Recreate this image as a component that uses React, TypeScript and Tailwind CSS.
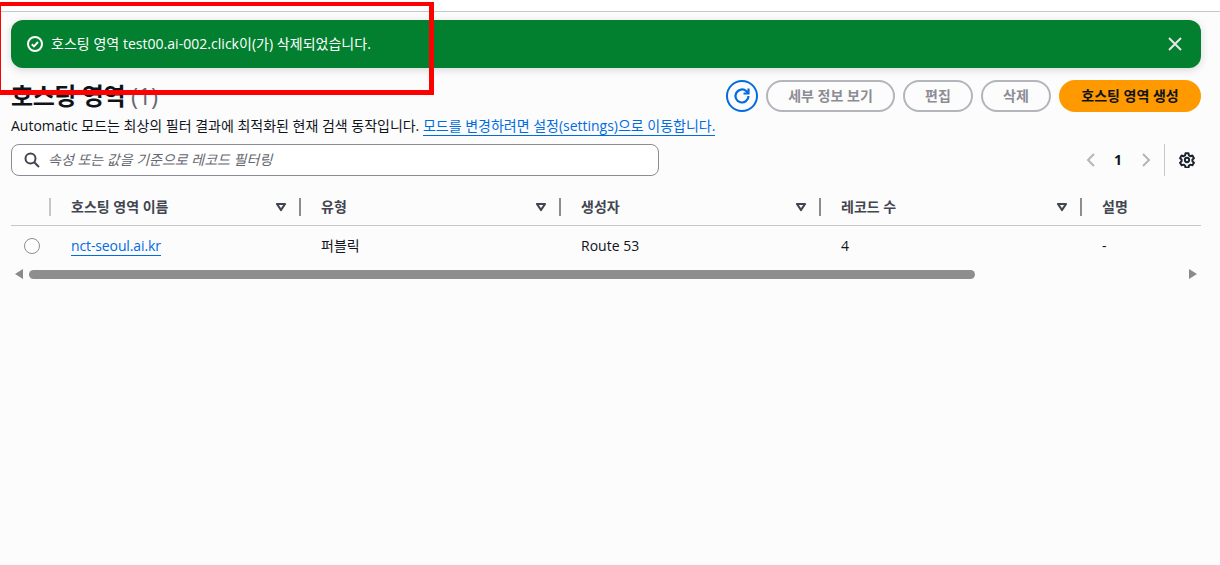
const FONT = "font-['Open_Sans','Noto_Sans_CJK_KR',sans-serif]";

const columns = [
  { label: "호스팅 영역 이름", width: "w-[250px]", divider: "bg-[#c6c6cd]", caret: true },
  { label: "유형", width: "w-[260px]", divider: "bg-[#8c8c94]", caret: true },
  { label: "생성자", width: "w-[260px]", divider: "bg-[#8c8c94]", caret: true },
  { label: "레코드 수", width: "w-[261px]", divider: "bg-[#8c8c94]", caret: true },
  { label: "설명", width: "w-[100px]", divider: "bg-[#8c8c94]", caret: false },
];

const Caret = () => (
  <svg width="12" height="10" viewBox="0 0 12 10" className="shrink-0">
    <path d="M2 2h8L6 8z" fill="none" stroke="#424650" strokeWidth="2.200" strokeLinejoin="round" />
  </svg>
);

const PillButton = ({ label, width }: { label: string; width: string }) => (
  <div className={`flex h-8 items-center justify-center rounded-full border-2 border-[#b4b4bb] text-sm font-bold text-[#8c8c94] ${width}`}>
    {label}
  </div>
);

export default function App() {
  return (
    <div className={`relative h-[565px] w-[1220px] overflow-hidden bg-[#fcfcfd] ${FONT}`}>
      <div className="h-[12px] border-b border-[#c6c6cd] bg-white" />

      <div className="mx-[11px] mt-2 flex h-12 w-[1190px] items-center justify-between rounded-xl bg-[#037f30] pl-4 pr-[18px] text-white shadow-[0_2px_8px_rgba(0,7,22,0.15)]">
        <div className="flex items-center gap-2 text-sm tracking-[0.03px]">
          <svg width="16" height="16" viewBox="0 0 16 16" fill="none" stroke="white" strokeWidth="2">
            <circle cx="8" cy="8" r="7" />
            <path d="M4.800 8.200l2.200 2.200 4-4.400" />
          </svg>
          <span>호스팅 영역 test00.ai-002.click이(가) 삭제되었습니다.</span>
        </div>
        <svg width="16" height="16" viewBox="0 0 16 16" fill="none" stroke="#e8e8ea" strokeWidth="2">
          <path d="M2 2l12 12M14 2L2 14" />
        </svg>
      </div>

      <div className="mx-[11px] mt-3 flex h-8 w-[1190px] items-center justify-between">
        <h1 className="text-2xl font-bold leading-[30px] tracking-[-0.4px] text-[#0f141a]">
          호스팅 영역 <span className="font-normal text-[#656871]">(1)</span>
        </h1>
        <div className="flex items-center gap-2">
          <div className="flex h-8 w-8 items-center justify-center rounded-full border-2 border-[#006ce0]">
            <svg width="18" height="18" viewBox="0 0 18 18" fill="none" stroke="#006ce0" strokeWidth="2.200">
              <path d="M15.500 9a6.500 6.500 0 1 1-2.100-4.800L15.500 6" />
              <path d="M15.500 1.500V6.500H10.500" />
            </svg>
          </div>
          <PillButton label="세부 정보 보기" width="w-[129px]" />
          <PillButton label="편집" width="w-[70px]" />
          <PillButton label="삭제" width="w-[70px]" />
          <div className="flex h-8 w-[142px] items-center justify-center rounded-full bg-[#ff9900] text-sm font-bold text-[#0f141a]">
            호스팅 영역 생성
          </div>
        </div>
      </div>

      <p className="mx-[11px] mt-[4px] h-5 text-sm leading-5 tracking-[-0.01px] text-[#0f141a]">
        Automatic 모드는 최상의 필터 결과에 최적화된 현재 검색 동작입니다.{" "}
        <span className="border-b border-[#006ce0] text-[#006ce0]">모드를 변경하려면 설정(settings)으로 이동합니다.</span>
      </p>

      <div className="mx-[11px] mt-[8px] flex h-8 w-[1190px] items-center justify-between">
        <div className="flex h-8 w-[648px] items-center gap-[8px] rounded-lg border border-[#8c8c94] bg-white pl-[12px] text-sm italic text-[#656871]">
          <svg width="16" height="16" viewBox="0 0 16 16" fill="none" stroke="#424650" strokeWidth="2" className="shrink-0">
            <circle cx="6.500" cy="6.500" r="5" />
            <path d="M10.200 10.200L15 15" />
          </svg>
          <span>속성 또는 값을 기준으로 레코드 필터링</span>
        </div>
        <div className="flex h-8 items-center">
          <svg width="12" height="14" viewBox="0 0 12 14" fill="none" stroke="#b4b4bb" strokeWidth="2">
            <path d="M9 1L3 7l6 6" />
          </svg>
          <span className="ml-[15px] w-[12px] text-center text-sm font-bold text-[#0f141a]">1</span>
          <svg width="12" height="14" viewBox="0 0 12 14" fill="none" stroke="#b4b4bb" strokeWidth="2" className="ml-[16px]">
            <path d="M3 1l6 6-6 6" />
          </svg>
          <div className="ml-[12px] h-8 w-px bg-[#c6c6cd]" />
          <svg width="16" height="16" viewBox="0 0 24 24" fill="none" stroke="#1b232d" strokeWidth="3" strokeLinejoin="round" className="ml-[14px] mr-[6px]">
            <path d="M9.700 2h4.600l.6 3 2.300 1.300 2.900-1 2.300 4-2.300 2v2.700l2.300 2-2.300 4-2.900-1-2.300 1.300-.6 3H9.700l-.6-3-2.300-1.300-2.900 1-2.300-4 2.300-2v-2.700l-2.300-2 2.300-4 2.900 1L9.100 5z" />
            <circle cx="12" cy="12" r="3.200" />
          </svg>
        </div>
      </div>

      <div className="ml-[11px] mt-[14px] flex h-[36px] w-[1190px] items-center border-b border-[#c6c6cd] pb-[2px] text-sm font-bold text-[#424650]">
        <div className="w-[38px]" />
        {columns.map((c) => (
          <div key={c.label} className={`flex items-center ${c.width}`}>
            <div className={`h-[18px] w-[2px] shrink-0 ${c.divider}`} />
            <span className="ml-[20px] flex-1">{c.label}</span>
            {c.caret && (
              <div className="mr-[12px]">
                <Caret />
              </div>
            )}
          </div>
        ))}
      </div>

      <div className="ml-[11px] flex h-[41px] w-[1190px] items-center pb-[1px] text-sm text-[#0f141a]">
        <div className="w-[38px] shrink-0 pl-[13px]">
          <div className="h-4 w-4 rounded-full border border-[#8c8c94] bg-white" />
        </div>
        <div className="w-[250px] pl-[22px]">
          <span className="border-b border-[#006ce0] tracking-[-0.12px] text-[#006ce0]">nct-seoul.ai.kr</span>
        </div>
        <div className="w-[260px] pl-[22px]">퍼블릭</div>
        <div className="w-[260px] pl-[22px]">Route 53</div>
        <div className="w-[261px] pl-[22px]">4</div>
        <div className="pl-[22px]">-</div>
      </div>

      <div className="ml-[14px] mt-[2px] flex h-[10px] w-[1184px] items-center">
        <svg width="9" height="10" viewBox="0 0 9 10" className="shrink-0">
          <path d="M9 0v10L1 5z" fill="#8a8a8a" />
        </svg>
        <div className="ml-[6px] h-[9px] w-[946px] rounded-full bg-[#8e8e8e]" />
        <div className="flex-1" />
        <svg width="9" height="10" viewBox="0 0 9 10" className="shrink-0">
          <path d="M0 0v10l8-5z" fill="#8a8a8a" />
        </svg>
      </div>

      <div className="pointer-events-none absolute -left-[4px] top-[2px] h-[93px] w-[438px] border-[5px] border-t-[4px] border-[#ff0000]" />
    </div>
  );
}
